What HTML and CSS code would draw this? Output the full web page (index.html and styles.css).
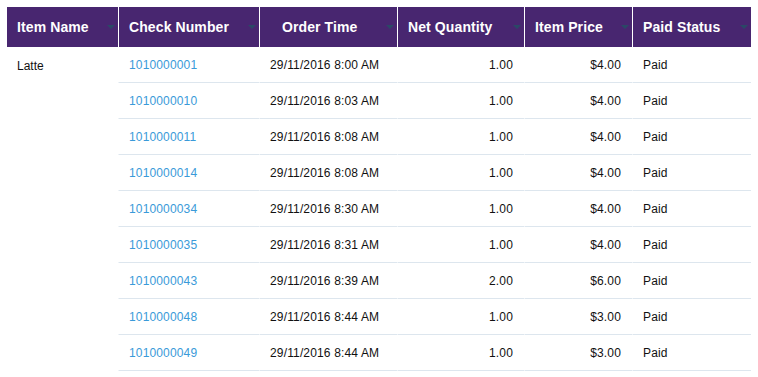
FILE: index.html
```html
<!DOCTYPE html>
<html>
<head>
<meta charset="utf-8">
<link rel="stylesheet" href="styles.css">
</head>
<body>
<div class="grid">
  <div class="th first">Item Name<span class="caret"></span></div>
  <div class="th">Check Number<span class="caret"></span></div>
  <div class="th order">Order Time<span class="caret"></span></div>
  <div class="th">Net Quantity<span class="caret"></span></div>
  <div class="th">Item Price<span class="caret"></span></div>
  <div class="th">Paid Status<span class="caret"></span></div>

  <div class="item">Latte</div>

  <div class="td"><a class="link">1010000001</a></div><div class="td">29/11/2016 8:00 AM</div><div class="td num">1.00</div><div class="td num">$4.00</div><div class="td">Paid</div>
  <div class="td"><a class="link">1010000010</a></div><div class="td">29/11/2016 8:03 AM</div><div class="td num">1.00</div><div class="td num">$4.00</div><div class="td">Paid</div>
  <div class="td"><a class="link">1010000011</a></div><div class="td">29/11/2016 8:08 AM</div><div class="td num">1.00</div><div class="td num">$4.00</div><div class="td">Paid</div>
  <div class="td"><a class="link">1010000014</a></div><div class="td">29/11/2016 8:08 AM</div><div class="td num">1.00</div><div class="td num">$4.00</div><div class="td">Paid</div>
  <div class="td"><a class="link">1010000034</a></div><div class="td">29/11/2016 8:30 AM</div><div class="td num">1.00</div><div class="td num">$4.00</div><div class="td">Paid</div>
  <div class="td"><a class="link">1010000035</a></div><div class="td">29/11/2016 8:31 AM</div><div class="td num">1.00</div><div class="td num">$4.00</div><div class="td">Paid</div>
  <div class="td"><a class="link">1010000043</a></div><div class="td">29/11/2016 8:39 AM</div><div class="td num">2.00</div><div class="td num">$6.00</div><div class="td">Paid</div>
  <div class="td"><a class="link">1010000048</a></div><div class="td">29/11/2016 8:44 AM</div><div class="td num">1.00</div><div class="td num">$3.00</div><div class="td">Paid</div>
  <div class="td"><a class="link">1010000049</a></div><div class="td">29/11/2016 8:44 AM</div><div class="td num">1.00</div><div class="td num">$3.00</div><div class="td">Paid</div>
</div>
</body>
</html>
```

FILE: styles.css
```css
html, body {
  margin: 0;
  padding: 0;
  background: #ffffff;
}
body {
  padding: 7px;
  font-family: "Liberation Sans", Arial, sans-serif;
  font-size: 12px;
  color: #111111;
}
.grid {
  display: grid;
  width: 744px;
  grid-template-columns: 111px 141px 138px 127px 108px 119px;
  grid-template-rows: 40px repeat(9, 36px);
}
.th {
  position: relative;
  background: #482670;
  color: #ffffff;
  font-weight: bold;
  font-size: 14px;
  letter-spacing: 0.1px;
  display: flex;
  align-items: center;
  padding-left: 10px;
  border-left: 1px solid #ffffff;
  box-sizing: border-box;
}
.th.first {
  border-left: none;
}
.th.order {
  padding-left: 22px;
}
.caret {
  position: absolute;
  right: 3px;
  top: 18px;
  width: 0;
  height: 0;
  border-left: 4px solid transparent;
  border-right: 4px solid transparent;
  border-top: 4px solid #2a4866;
}
.item {
  grid-column: 1;
  grid-row: 2 / span 9;
  padding: 12px 10px 0 10px;
}
.td {
  display: flex;
  align-items: center;
  padding: 0 10px;
  letter-spacing: 0.15px;
  border-left: 1px solid #ffffff;
  border-bottom: 1px solid #dde6ee;
  box-sizing: border-box;
  white-space: nowrap;
}
.td.num {
  justify-content: flex-end;
  padding-right: 11px;
}
.link {
  color: #3a9ad9;
  text-decoration: none;
}
```
